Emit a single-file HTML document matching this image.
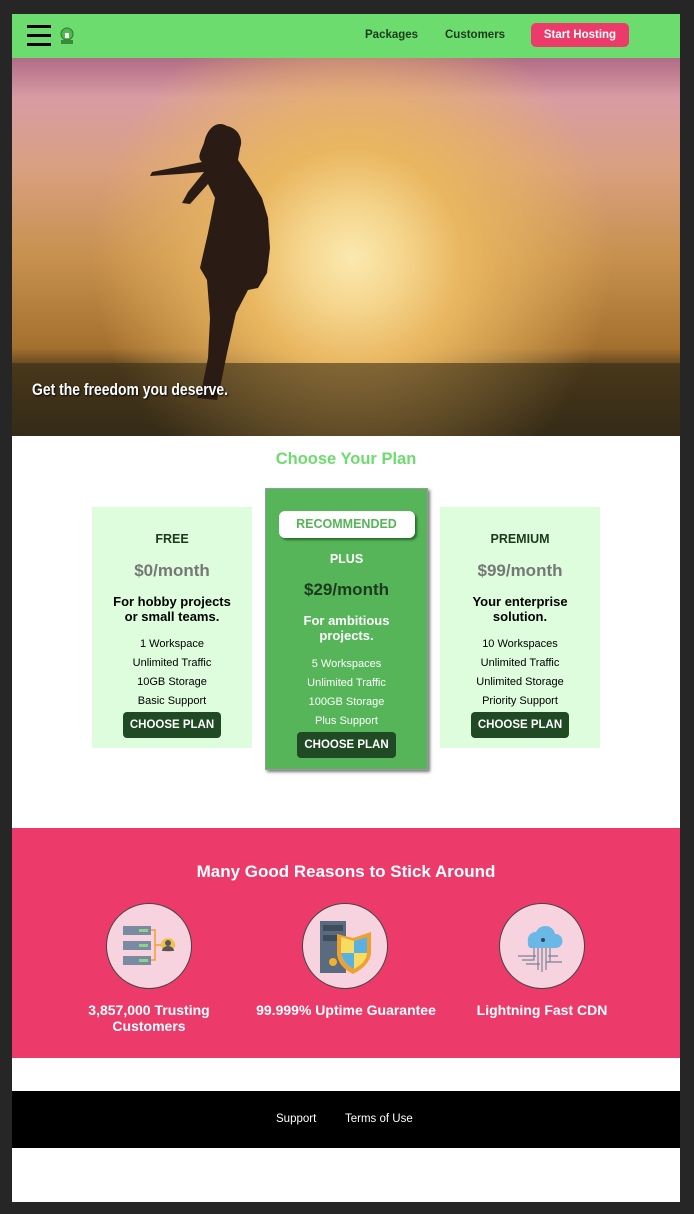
<!DOCTYPE html>
<html><head><meta charset="utf-8"><style>
*{margin:0;padding:0;box-sizing:border-box}
body{width:694px;height:1214px;background:#262626;font-family:"Liberation Sans",sans-serif;position:relative;overflow:hidden}
#page{position:absolute;left:12px;top:14px;width:668px;height:1188px;background:#fff;overflow:hidden}
.hdr{position:absolute;left:0;top:0;width:668px;height:44px;background:#6ddc6e}
.burger span{position:absolute;left:15px;width:24px;height:2.5px;background:#000}
.nav{position:absolute;top:15px;font-size:11.5px;font-weight:bold;color:#1e3a1e}
.btn-h{position:absolute;left:519px;top:9px;width:98px;height:24px;background:#ec3a6a;border-radius:5px;color:#fff;font-size:11.5px;font-weight:bold;text-align:center;line-height:24px}
.hero{position:absolute;left:0;top:44px;width:668px;height:378px;overflow:hidden;
background:radial-gradient(circle at 340px 200px,#fbe9b0 0,#f5d68e 50px,#e9b660 110px,rgba(200,140,60,0) 260px),linear-gradient(#b06c86 0,#d89ca4 40px,#d9a080 110px,#c7904e 200px,#a4702e 290px,#5a4220 310px,#2d2616 378px)}
.hero .t{position:absolute;left:20px;top:322px;color:#fff;font-weight:bold;font-size:17px;transform:scaleX(.82);transform-origin:left;text-shadow:1px 1px 2px #000}
h2{position:absolute;width:668px;text-align:center;font-weight:bold}
.card{position:absolute;background:#ddfddd;text-align:center;color:#000}
.card .n{font-weight:bold;font-size:12.5px;color:#1e3a1e}
.card .p{font-weight:bold;font-size:17px;color:#777}
.card .d{font-weight:bold;font-size:13px;line-height:15px}
.card .f{font-size:11px;line-height:19px}
.cb{display:inline-block;background:#1f4a24;color:#fff;font-weight:bold;font-size:11.5px;padding:0 7px;height:26px;line-height:26px;border-radius:4px}
.pink{position:absolute;left:0;top:814px;width:668px;height:230px;background:#ec3a6a}
.circ{position:absolute;top:889px;width:86px;height:86px;border-radius:50%;background:#f6d3df;border:1.5px solid #444}
.lbl{position:absolute;top:988px;color:#fff;font-weight:bold;font-size:14px;text-align:center;line-height:16px}
.foot{position:absolute;left:0;top:1077px;width:668px;height:57px;background:#000;color:#fff;font-size:11.5px}
</style></head><body><div id="page">
<div class="hdr">
<div class="burger"><span style="top:11px"></span><span style="top:20px"></span><span style="top:29px"></span></div>
<svg style="position:absolute;left:46px;top:12px" width="18" height="20"><circle cx="9" cy="8" r="6" fill="#4fb84f" stroke="#2b7a2b"/><rect x="3" y="14" width="12" height="4" fill="#3a8a3a"/><rect x="7" y="7" width="4" height="5" fill="#fff"/></svg>
<div class="nav" style="left:353px">Packages</div>
<div class="nav" style="left:433px">Customers</div>
<div class="btn-h">Start Hosting</div>
</div>
<div class="hero">
<svg style="position:absolute;left:0;top:0" width="668" height="378">
<rect x="0" y="305" width="668" height="73" fill="#3a2e18" opacity=".6"/>
<path d="M215 68 C205 62 195 70 192 85 C188 95 185 100 190 104 L170 108 L140 114 L138 118 L168 116 L192 114 L176 134 L170 145 L178 146 L196 126 L203 140 L196 175 L188 210 L195 222 L198 260 L196 300 L190 330 L185 340 L205 342 L208 330 L215 295 L224 255 L236 232 L246 230 L255 215 L258 190 L256 160 L250 140 L238 120 L226 102 L228 90 C232 80 225 70 215 68Z" fill="#2a1c14"/>
</svg>
<div class="t">Get the freedom you deserve.</div>
</div>
<h2 style="top:436px;font-size:16.5px;color:#6ddc6e">Choose Your Plan</h2>
<div class="card" style="left:80px;top:493px;width:160px;height:241px">
<div class="n" style="margin-top:25px">FREE</div>
<div class="p" style="margin-top:15px">$0/month</div>
<div class="d" style="margin-top:13px">For hobby projects<br>or small teams.</div>
<div class="f" style="margin-top:11px">1 Workspace<br>Unlimited Traffic<br>10GB Storage<br>Basic Support</div>
<div class="cb" style="margin-top:1px">CHOOSE PLAN</div>
</div>
<div class="card" style="left:253px;top:474px;width:163px;height:282px;background:#55b558;box-shadow:2px 2px 3px #777;border:1px solid #999">
<div style="margin:22px auto 0;width:136px;height:27px;background:#fff;border-radius:6px;box-shadow:2px 2px 2px #2a6a2a;color:#55b558;font-weight:bold;font-size:12.5px;line-height:27px">RECOMMENDED</div>
<div class="n" style="margin-top:14px;color:#fff">PLUS</div>
<div class="p" style="margin-top:14px;color:#1e3a1e">$29/month</div>
<div class="d" style="margin-top:13px;color:#fff">For ambitious<br>projects.</div>
<div class="f" style="margin-top:12px;color:#fff">5 Workspaces<br>Unlimited Traffic<br>100GB Storage<br>Plus Support</div>
<div class="cb" style="margin-top:1px">CHOOSE PLAN</div>
</div>
<div class="card" style="left:428px;top:493px;width:160px;height:241px">
<div class="n" style="margin-top:25px">PREMIUM</div>
<div class="p" style="margin-top:15px">$99/month</div>
<div class="d" style="margin-top:13px">Your enterprise<br>solution.</div>
<div class="f" style="margin-top:11px">10 Workspaces<br>Unlimited Traffic<br>Unlimited Storage<br>Priority Support</div>
<div class="cb" style="margin-top:1px">CHOOSE PLAN</div>
</div>
<div class="pink"></div>
<h2 style="top:848px;font-size:17px;color:#fff">Many Good Reasons to Stick Around</h2>
<div class="circ" style="left:94px"><svg width="86" height="86"><g fill="#7a8aa0"><rect x="16" y="22" width="28" height="9"/><rect x="16" y="37" width="28" height="9"/><rect x="16" y="52" width="28" height="9"/></g><g fill="#8ed08e"><rect x="32" y="25" width="9" height="3"/><rect x="32" y="40" width="9" height="3"/><rect x="32" y="55" width="9" height="3"/></g><path d="M44 26H48V56H44M48 41H56" stroke="#f0a030" fill="none" stroke-width="1.5"/><circle cx="61" cy="41" r="7" fill="#f6c040"/><circle cx="61" cy="39" r="3" fill="#556"/><path d="M55 47a6 5 0 0 1 12 0z" fill="#556"/></svg></div>
<div class="circ" style="left:290px"><svg width="86" height="86"><rect x="17" y="17" width="26" height="52" fill="#5a6b80"/><rect x="20" y="21" width="20" height="6" fill="#3e4c5e"/><rect x="20" y="31" width="20" height="6" fill="#3e4c5e"/><circle cx="30" cy="58" r="4" fill="#f0b030"/><path d="M50 34 L68 28 L68 50 C66 60 58 66 50 70 C42 66 35 60 34 50 L34 30Z" fill="#f0a030"/><path d="M51 37 L64 33 L64 50 C63 57 57 62 51 65 C45 62 39 57 38 50 L38 33Z" fill="#f7dc60"/><path d="M51 37 L64 33 L64 49 L51 49Z M51 49 L51 65 C45 62 39 57 38 49Z" fill="#5ab0e0"/></svg></div>
<div class="circ" style="left:487px"><svg width="86" height="86"><path d="M28 38a8 8 0 0 1 8-10a10 10 0 0 1 19 2a7 7 0 0 1 1 14H30a6 6 0 0 1-2-6z" fill="#6ab8e6"/><circle cx="43" cy="36" r="2" fill="#345"/><path d="M38 44v22M42 44v24M46 44v22M50 44v14h12M34 44v12H22M36 52H18M48 52h10M40 60H26M46 58h14" stroke="#7a8294" fill="none" stroke-width="1.2"/></svg></div>
<div class="lbl" style="left:63px;width:148px">3,857,000 Trusting<br>Customers</div>
<div class="lbl" style="left:230px;width:208px">99.999% Uptime Guarantee</div>
<div class="lbl" style="left:450px;width:160px">Lightning Fast CDN</div>
<div class="foot"><span style="position:absolute;left:264px;top:22px">Support</span><span style="position:absolute;left:333px;top:22px">Terms of Use</span></div>
</div></body></html>
